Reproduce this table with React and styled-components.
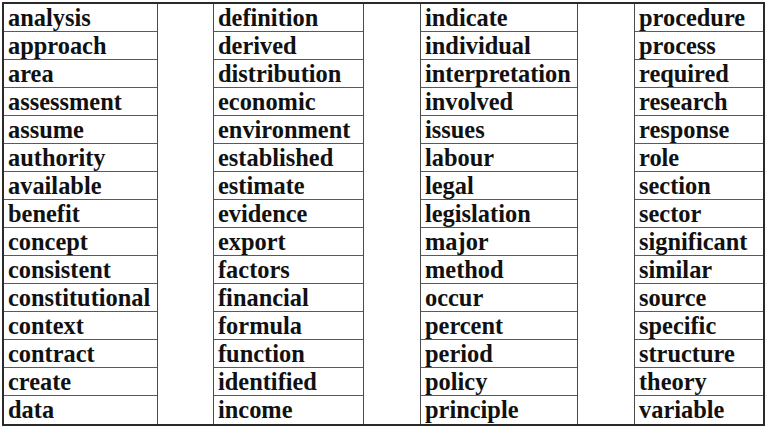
import React from "react";
import styled, { createGlobalStyle } from "styled-components";

const Global = createGlobalStyle`
  html, body { margin: 0; padding: 0; background: #fff; }
  body { font-family: "Liberation Serif", "Times New Roman", serif; }
`;

const Page = styled.div`
  width: 768px;
  height: 429px;
  padding: 2px 0 0 2px;
  box-sizing: border-box;
  background: #fff;
`;

const Table = styled.div`
  display: flex;
  width: 763px;
  box-sizing: border-box;
  border: 2px solid #2a2a2a;
`;

const Column = styled.div`
  display: flex;
  flex-direction: column;
  width: ${(p) => p.$w}px;
  box-sizing: border-box;
  border-right: ${(p) => (p.$last ? "none" : "1px solid #4a4a4a")};
`;

const Spacer = styled.div`
  width: ${(p) => p.$w}px;
  box-sizing: border-box;
  border-right: 1px solid #4a4a4a;
`;

const Cell = styled.div`
  height: 28px;
  box-sizing: border-box;
  border-bottom: 1px solid #5a5a5a;
  padding-left: 4px;
  font-family: "Liberation Serif", "Times New Roman", serif;
  font-weight: bold;
  font-size: 24.4px;
  line-height: 27px;
  color: #111;
  white-space: nowrap;
  overflow: hidden;
  &:last-child { border-bottom: none; }
`;

const columns = [
  { w: 154, words: ["analysis","approach","area","assessment","assume","authority","available","benefit","concept","consistent","constitutional","context","contract","create","data"] },
  { w: 150, words: ["definition","derived","distribution","economic","environment","established","estimate","evidence","export","factors","financial","formula","function","identified","income"] },
  { w: 157, words: ["indicate","individual","interpretation","involved","issues","labour","legal","legislation","major","method","occur","percent","period","policy","principle"] },
  { w: 128, words: ["procedure","process","required","research","response","role","section","sector","significant","similar","source","specific","structure","theory","variable"] },
];

const spacers = [56, 57, 57];

export default function App() {
  return (
    <>
      <Global />
      <Page>
        <Table>
          {columns.map((c, i) => (
            <React.Fragment key={i}>
              <Column $w={c.w} $last={i === columns.length - 1}>
                {c.words.map((w) => (
                  <Cell key={w}>{w}</Cell>
                ))}
              </Column>
              {i < spacers.length && <Spacer $w={spacers[i]} />}
            </React.Fragment>
          ))}
        </Table>
      </Page>
    </>
  );
}
